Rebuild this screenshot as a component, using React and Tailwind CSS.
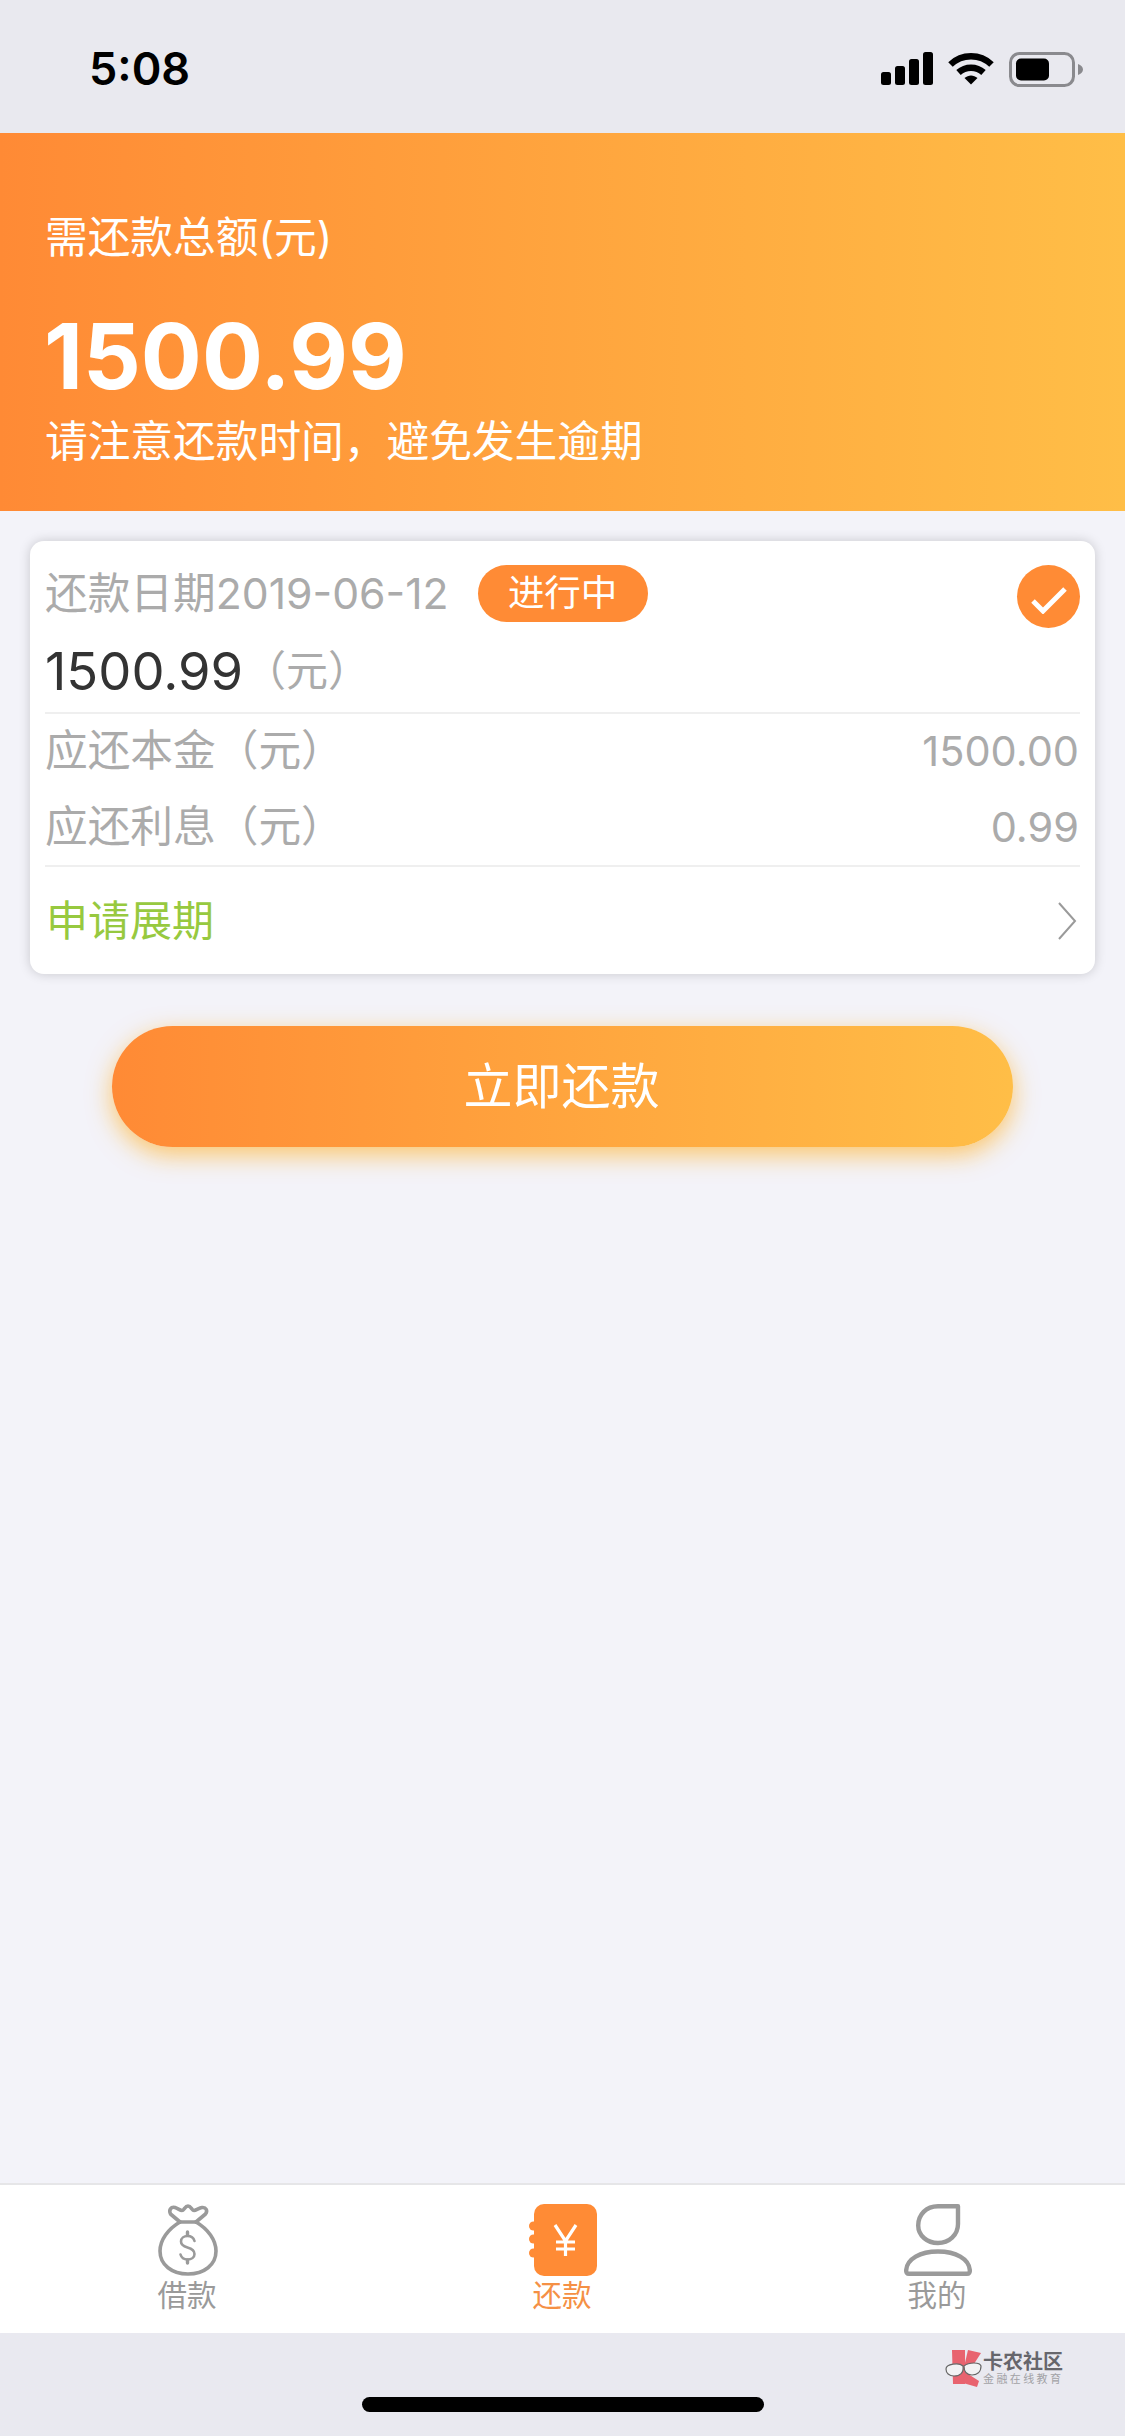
const base = "[font-family:Inter,'Noto_Sans_CJK_SC',sans-serif]";

function Signal() {
  return (
    <svg width="52" height="33" viewBox="0 0 52 33" fill="#000">
      <rect x="0" y="20" width="10" height="13" rx="2.5" />
      <rect x="14" y="14" width="10" height="19" rx="2.5" />
      <rect x="28" y="7" width="10" height="26" rx="2.5" />
      <rect x="42" y="0" width="10" height="33" rx="2.5" />
    </svg>
  );
}

function Wifi() {
  return (
    <svg width="46" height="33" viewBox="0 0 46 33" fill="none" stroke="#000" strokeWidth="6.5">
      <path d="M2.5 12.5 C14 1.5 32 1.5 43.5 12.5" />
      <path d="M10.5 20.5 C17.5 14 28.5 14 35.5 20.5" />
      <path d="M16.5 26 L23 32.5 L29.5 26 C25.5 22.5 20.5 22.5 16.5 26 Z" fill="#000" stroke="none" />
    </svg>
  );
}

function Battery() {
  return (
    <svg width="74" height="35" viewBox="0 0 74 35" fill="none">
      <rect x="1.5" y="1.5" width="63" height="32" rx="9" stroke="#8a8a8e" strokeWidth="3" />
      <rect x="7" y="6.5" width="33" height="22" rx="5" fill="#000" />
      <path d="M69 12 C72 13 74 15 74 17.5 C74 20 72 22 69 23 Z" fill="#8a8a8e" />
    </svg>
  );
}

function Bag() {
  return (
    <svg width="60" height="72" viewBox="0 0 60 72" fill="none" stroke="#9a9a9a" strokeWidth="3.6" strokeLinejoin="round" strokeLinecap="round">
      <path d="M22 18 L12.5 10 C10.5 6 13 2.5 17 3.5 C20 4.5 22 6.5 24 6.5 C26 6.5 27 2 30 2 C33 2 34 6.5 36 6.5 C38 6.5 41 4 44 3.5 C48 3 50 6.5 47.5 10 L38 18" />
      <path d="M22 18 L38 18" />
      <path d="M22 18 C10 25 2 36 2 47 C2 61 14 70 30 70 C46 70 58 61 58 47 C58 36 50 25 38 18" />
      <path d="M36.5 37 C35.5 33.5 32.5 32 29.5 32 C26 32 23 34 23 37.5 C23 41 26 42.5 29.5 43.5 C33 44.5 36.5 46 36.5 50 C36.5 53.5 33.5 55.5 29.5 55.5 C26 55.5 23.5 54 22.5 50.5" strokeWidth="2.6" />
      <path d="M29.5 28 L29.5 31 M29.5 56 L29.5 59" strokeWidth="3.4" />
    </svg>
  );
}

function Note() {
  return (
    <svg width="68" height="72" viewBox="0 0 68 72">
      <rect x="5" y="0" width="63" height="72" rx="10" fill="#ff8b35" />
      <circle cx="4.5" cy="22" r="4.5" fill="#ff8b35" />
      <circle cx="4.5" cy="35" r="4.5" fill="#ff8b35" />
      <circle cx="4.5" cy="49" r="4.5" fill="#ff8b35" />
      <path d="M26 21 L36.5 37 L47 21 M36.5 37 L36.5 52 M27 38 L46 38 M27 45 L46 45" fill="none" stroke="#fff" strokeWidth="3.2" />
    </svg>
  );
}

function Person() {
  return (
    <svg width="68" height="72" viewBox="0 0 68 72" fill="none" stroke="#9a9a9a" strokeWidth="4.4" strokeLinejoin="round">
      <path d="M54 2.2 L34 2.2 C22 2.2 14.2 11 14.2 21.5 C14.2 31.5 23 39 34 39 C45 39 54 31 54 20 Z" />
      <path d="M2.2 66 C3 55 16 47.5 34 47.5 C52 47.5 65 55 65.8 66 C66 68.5 65 69.8 63 69.8 L5 69.8 C3 69.8 2 68.5 2.2 66 Z" />
    </svg>
  );
}

function Logo() {
  return (
    <svg width="37" height="38" viewBox="0 0 37 38">
      <path d="M7 1 L20 1 L20 35 L8 35 Z" fill="#e8636f" />
      <path d="M23 1 L36 4 L27 18 L19 18 Z" fill="#e8636f" />
      <path d="M20 23 L34 32 L32 38 L18 34 Z" fill="#e8636f" />
      <path d="M1 20 C1 15 14 13 18 17 C19 24 15 27 9 27 C4 27 1 24 1 20 Z" fill="#f2f2f4" stroke="#666" strokeWidth="1.2" />
      <path d="M19 17 C24 13 35 13 36 17 C36 23 32 26 27 26 C22 26 19 23 19 17 Z" fill="#f2f2f4" stroke="#666" strokeWidth="1.2" />
    </svg>
  );
}

function Tab({ label, active, children }) {
  return (
    <div className="flex flex-col items-center pt-[19px]">
      <div className="h-[72px] flex items-center justify-center">{children}</div>
      <div className={`mt-[3px] -ml-[1px] text-[29.5px] leading-[32px] ${active ? "text-[#f59045]" : "text-[#9a9a9a]"}`}>{label}</div>
    </div>
  );
}

export default function App() {
  return (
    <div className={`${base} w-[1125px] h-[2436px] flex flex-col bg-[#f3f3f9] overflow-hidden`}>
      <div className="h-[133px] bg-[#e9e9ef] flex items-start justify-between pt-[52px] pl-[89px] pr-[42px]">
        <div className="text-[45px] leading-[34px] font-semibold text-black">5:08</div>
        <div className="flex items-start gap-[15px]">
          <Signal />
          <Wifi />
          <Battery />
        </div>
      </div>

      <div className="h-[378px] pl-[45px] pt-[80px] bg-gradient-to-r from-[#ff8a35] to-[#ffbe47] text-white">
        <div className="text-[42.7px] leading-[50px]">需还款总额(元)</div>
        <div className="mt-[43px] -ml-[1px] text-[90.5px] leading-[100px] font-bold">1500.99</div>
        <div className="mt-[11px] text-[42.7px] leading-[50px]">请注意还款时间，避免发生逾期</div>
      </div>

      <div className="mx-[30px] mt-[30px] h-[433px] rounded-[14px] bg-white px-[15px] pt-[24px] shadow-[0_0_12px_rgba(0,0,0,0.18)]">
        <div className="h-[63px] flex items-start">
          <div className="h-[57px] flex items-center text-[42.7px] leading-[50px] text-[#ababab]">还款日期2019-06-12</div>
          <div className="ml-[29px] w-[170px] h-[57px] rounded-full bg-[#ff8b35] text-white text-[36.5px] leading-[57px] text-center">进行中</div>
          <div className="ml-auto w-[63px] h-[63px] rounded-full bg-[#ff8b35] flex items-center justify-center">
            <svg className="mt-[6px]" width="36" height="28" viewBox="0 0 36 28" fill="none" stroke="#fff" strokeWidth="5">
              <path d="M2 15 L12 25 L34 3" />
            </svg>
          </div>
        </div>
        <div className="mt-[13px] h-[60px] flex items-center">
          <span className="text-[52.5px] leading-[60px] text-[#333333]">1500.99</span>
          <span className="ml-[1px] text-[42px] leading-[60px] text-[#ababab]">（元）</span>
        </div>
        <div className="mt-[11px] h-[2px] bg-[#efefef]" />
        <div className="h-[75px] flex items-center justify-between text-[42.7px] text-[#ababab]">
          <span>应还本金（元）</span>
          <span className="text-[41.5px] pr-[1px]">1500.00</span>
        </div>
        <div className="h-[76px] flex items-center justify-between text-[42.7px] text-[#ababab]">
          <span>应还利息（元）</span>
          <span className="text-[41.5px] pr-[1px]">0.99</span>
        </div>
        <div className="h-[2px] bg-[#efefef]" />
        <div className="h-[107px] pl-[1px] flex items-center justify-between text-[42px] text-[#97c93f]">
          <span>申请展期</span>
          <svg className="mr-[3px]" width="20" height="38" viewBox="0 0 20 38" fill="none" stroke="#9a9a9a" strokeWidth="2">
            <path d="M2 1 L18 19 L2 37" />
          </svg>
        </div>
      </div>

      <div className="mx-auto mt-[52px] w-[901px] h-[121px] rounded-full bg-gradient-to-r from-[#ff8a35] to-[#ffbe47] text-white text-[49px] pr-[2px] flex items-center justify-center shadow-[0_8px_24px_rgba(255,180,50,0.7)]">
        立即还款
      </div>

      <div className="flex-1" />

      <div className="h-[150px] bg-white border-t-2 border-[#e6e6e8] grid grid-cols-3">
        <Tab label="借款"><Bag /></Tab>
        <Tab label="还款" active><Note /></Tab>
        <Tab label="我的"><Person /></Tab>
      </div>

      <div className="relative h-[103px] bg-[#e9e9f0] pt-[64px]">
        <div className="mx-auto w-[402px] h-[15px] rounded-full bg-black" />
        <div className="absolute left-[945px] top-[16px] flex items-start">
          <Logo />
          <div className="ml-[1px] pt-[3px] flex flex-col">
            <span className="text-[20px] leading-[20px] font-bold text-[#66666c] whitespace-nowrap">卡农社区</span>
            <span className="mt-[1px] text-[11px] leading-[12px] tracking-[2.4px] text-[#a2a2a6] whitespace-nowrap">金融在线教育</span>
          </div>
        </div>
      </div>
    </div>
  );
}
